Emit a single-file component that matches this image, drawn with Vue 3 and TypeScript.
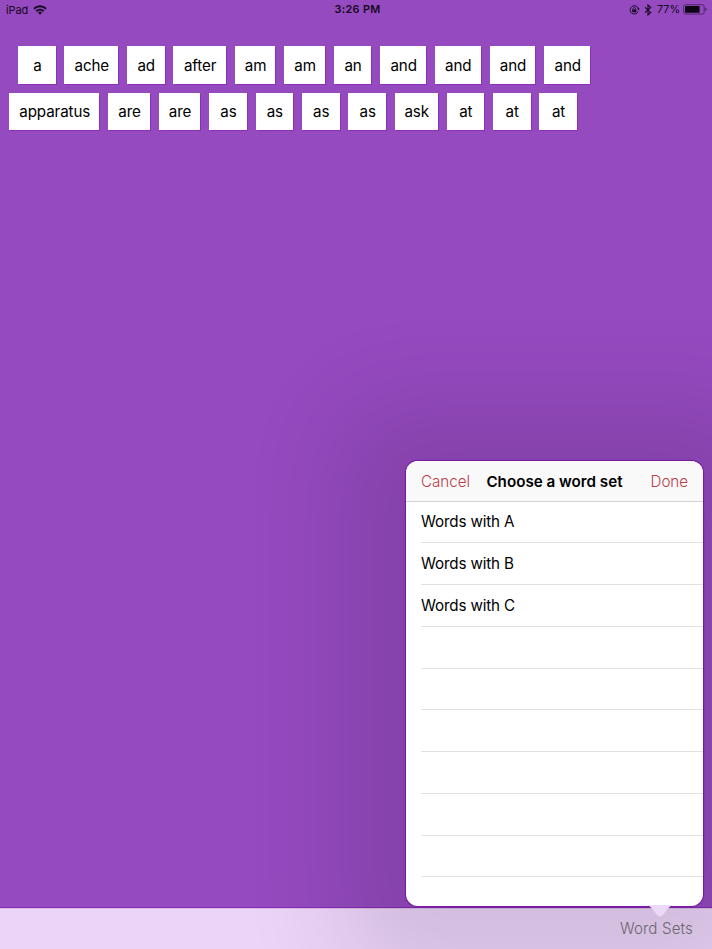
<script setup lang="ts">
interface Tile {
  text: string
  width: number
}

const tile = (text: string, width: number): Tile => ({ text, width })

const rows: Tile[][] = [
  [
    tile('a', 37.7), tile('ache', 53.6), tile('ad', 37.7), tile('after', 52.6),
    tile('am', 40.7), tile('am', 40.7), tile('an', 37.7), tile('and', 45.9),
    tile('and', 45.9), tile('and', 45.9), tile('and', 45.9),
  ],
  [
    tile('apparatus', 90.4), tile('are', 41.7), tile('are', 41.7), tile('as', 37.6),
    tile('as', 37.6), tile('as', 37.6), tile('as', 37.6), tile('ask', 43),
    tile('at', 37.6), tile('at', 37.6), tile('at', 37.6),
  ],
]

const wordSets: string[] = ['Words with A', 'Words with B', 'Words with C', '', '', '', '', '', '', '']
</script>

<template>
  <div class="screen">
    <header class="status">
      <div class="side">
        <span class="device">iPad</span>
        <svg class="wifi" width="14" height="10" viewBox="0 0 14 10">
          <g fill="none" stroke="#140820" stroke-width="1.9">
            <path d="M1 3.7 A8.6 8.6 0 0 1 13 3.7" />
            <path d="M3.3 6.2 A5.3 5.3 0 0 1 10.7 6.2" />
          </g>
          <path d="M4.9 7.6 A3 3 0 0 1 9.1 7.6 L7 9.8 Z" fill="#140820" />
        </svg>
      </div>
      <div class="time">3:26 PM</div>
      <div class="side right">
        <svg class="lock" width="11" height="10" viewBox="0 0 11 10">
          <g fill="none" stroke="#140820">
            <path d="M9.2 6.5 A4.2 4.2 0 1 1 9.4 3.8" stroke-width="0.9" />
            <path d="M4.1 4.8 V3.7 a1.2 1.2 0 0 1 2.4 0 V4.8" stroke-width="0.8" />
          </g>
          <rect x="3.2" y="4.4" width="4.2" height="2.9" rx="0.4" fill="#140820" />
          <path d="M8.1 3.6 L10.8 3.6 L9.5 5.5 Z" fill="#140820" />
        </svg>
        <svg class="bluetooth" width="8" height="12" viewBox="0 0 8 12">
          <path d="M1 3.3 L6.7 8.4 L4 11 V1 L6.7 3.6 L1 8.7" fill="none" stroke="#140820" stroke-width="1.1" />
        </svg>
        <span class="percent">77%</span>
        <svg class="battery" width="24" height="11" viewBox="0 0 24 11">
          <rect x="0.6" y="0.7" width="20.6" height="9.4" rx="2" fill="none" stroke="#4a2263" stroke-width="0.9" />
          <rect x="2" y="2" width="14.6" height="6.8" rx="0.5" fill="#0c0313" />
          <path d="M22.2 3.6 Q23.6 4.1 23.6 5.3 Q23.6 6.5 22.2 7 Z" fill="#4a2263" />
        </svg>
      </div>
    </header>

    <main class="board">
      <div v-for="(row, r) in rows" :key="r" class="row" :class="{ inset: r === 0 }">
        <div v-for="(item, i) in row" :key="i" class="tile" :style="{ width: item.width + 'px' }">
          {{ item.text }}
        </div>
      </div>
    </main>

    <footer class="toolbar">Word Sets</footer>

    <section class="popover">
      <div class="panel">
        <div class="nav">
          <span class="action">Cancel</span>
          <span class="title">Choose a word set</span>
          <span class="action done">Done</span>
        </div>
        <div class="list">
          <div v-for="(name, i) in wordSets" :key="i" class="item">{{ name }}</div>
        </div>
      </div>
      <svg class="arrow" width="30" height="13" viewBox="0 0 30 13">
        <path d="M0 0 C4 0 5.5 2 7.5 4.2 L12.4 10.3 Q15 13 17.6 10.3 L22.5 4.2 C24.5 2 26 0 30 0 Z" fill="#ecd8f7" />
      </svg>
    </section>
  </div>
</template>

<style>
body {
  margin: 0;
}
</style>

<style scoped>
.screen {
  position: relative;
  display: flex;
  flex-direction: column;
  width: 712px;
  height: 949px;
  overflow: hidden;
  background: #954abf;
  color: #000;
  font-family: Inter, "Liberation Sans", sans-serif;
  font-size: 15.2px;
  font-weight: 400;
}

.status {
  display: grid;
  grid-template-columns: 1fr auto 1fr;
  align-items: center;
  height: 19px;
  padding: 0 5px 0 6px;
  box-sizing: border-box;
  font-size: 11px;
  color: #140820;
}

.side {
  display: flex;
  align-items: center;
}

.right {
  justify-content: flex-end;
}

.device {
  letter-spacing: -0.1px;
}

.wifi {
  margin-left: 5px;
}

.time {
  padding-left: 2px;
  font-size: 10.8px;
  font-weight: 600;
  letter-spacing: 0.35px;
}

.bluetooth {
  margin-left: 4px;
}

.percent {
  margin: 0 3px 0 5px;
  font-size: 10.8px;
}

.board {
  flex: 1;
  display: flex;
  flex-direction: column;
  gap: 9px;
  padding: 27px 9px 0;
}

.row {
  display: flex;
  gap: 8.8px;
}

.inset {
  padding-left: 9px;
}

.tile {
  display: flex;
  flex: none;
  align-items: center;
  justify-content: center;
  height: 37.5px;
  padding-left: 1px;
  box-sizing: border-box;
  background: #fff;
  letter-spacing: -0.12px;
  box-shadow: 0 0 1px 0.5px rgba(132, 20, 184, 0.5);
}

.inset .tile {
  padding-top: 1px;
}

.toolbar {
  display: flex;
  align-items: center;
  justify-content: flex-end;
  height: 41px;
  padding: 0 19px 1px 0;
  box-sizing: border-box;
  border-top: 1px solid #d9bde8;
  background: #ecd4f9;
  color: #77707c;
  font-weight: 300;
  letter-spacing: 0.1px;
  box-shadow: 0 -1px 0 #852bb0;
}

.popover {
  position: absolute;
  left: 406px;
  top: 460.5px;
  width: 297px;
  height: 445px;
  border-radius: 12px;
  box-shadow: 0 0 1px 0.5px rgba(110, 5, 155, 0.7), 0 10px 100px 66px rgba(0, 0, 0, 0.108);
}

.panel {
  height: 100%;
  overflow: hidden;
  border-radius: 12px;
  background: #fff;
}

.nav {
  display: grid;
  grid-template-columns: 1fr auto 1fr;
  align-items: center;
  height: 41.2px;
  padding: 1px 15px 0;
  box-sizing: border-box;
  border-bottom: 1px solid #d2d2d3;
  background: #f9f9f9;
}

.title {
  font-weight: 600;
}

.action {
  color: #b93c4a;
  font-weight: 300;
  letter-spacing: -0.05px;
}

.done {
  text-align: right;
}

.list {
  padding-left: 15px;
}

.item {
  display: flex;
  align-items: center;
  height: 41.75px;
  padding-bottom: 0.5px;
  box-sizing: border-box;
  border-bottom: 1px solid #e1e1e3;
  letter-spacing: -0.15px;
}

.arrow {
  position: absolute;
  left: 239px;
  top: 444.5px;
}
</style>
